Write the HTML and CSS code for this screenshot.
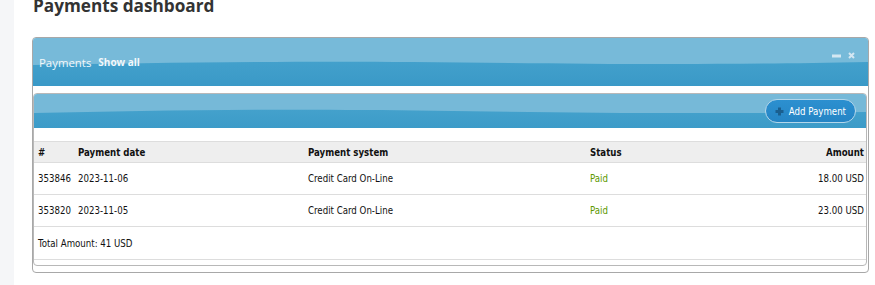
FILE: index.html
```html
<!DOCTYPE html>
<html lang="en">
<head>
  <meta charset="UTF-8">
  <meta name="viewport" content="width=device-width, initial-scale=1.0">
  <title>Payments dashboard</title>
  <link rel="stylesheet" href="styles.css">
</head>
<body>

<div class="sidebar"></div>

<div class="content">
  <h1 class="page-title">Payments dashboard</h1>

  <div class="panel">
    <div class="panel-head">
      <span class="panel-title">Payments</span>
      <a class="show-all" href="#">Show all</a>
      <span class="panel-tools">
        <svg width="9" height="4" viewBox="0 0 9 4"><rect x="0" y="0.5" width="9" height="3" fill="#d4e7f2"/></svg>
        <svg width="7" height="7" viewBox="0 0 7 7"><path d="M1 1L6 6M6 1L1 6" stroke="#d4e7f2" stroke-width="2"/></svg>
      </span>
    </div>

    <div class="panel-body">
      <div class="toolbar">
        <button class="add-btn">
          <svg width="9" height="9" viewBox="0 0 9 9"><path d="M4.5 0.5V8.5M0.5 4.5H8.5" stroke="#1a5f8f" stroke-width="3"/></svg>
          Add Payment
        </button>
      </div>

      <table class="payments">
        <colgroup>
          <col class="c-id">
          <col class="c-date">
          <col class="c-system">
          <col class="c-status">
          <col>
        </colgroup>
        <thead>
          <tr>
            <th>#</th>
            <th>Payment date</th>
            <th>Payment system</th>
            <th>Status</th>
            <th class="num">Amount</th>
          </tr>
        </thead>
        <tbody>
          <tr>
            <td>353846</td>
            <td>2023-11-06</td>
            <td>Credit Card On-Line</td>
            <td class="paid">Paid</td>
            <td class="num">18.00 USD</td>
          </tr>
          <tr>
            <td>353820</td>
            <td>2023-11-05</td>
            <td>Credit Card On-Line</td>
            <td class="paid">Paid</td>
            <td class="num">23.00 USD</td>
          </tr>
        </tbody>
        <tfoot>
          <tr>
            <td colspan="5">Total Amount: 41 USD</td>
          </tr>
        </tfoot>
      </table>
    </div>
  </div>
</div>

</body>
</html>
```

FILE: styles.css
```css
body {
  margin: 0;
  display: flex;
  min-height: 100vh;
  background-color: #fff;
  font-family: "DejaVu Sans Condensed", "DejaVu Sans", sans-serif;
  font-stretch: condensed;
  font-size: 9.6px;
  color: #111;
  overflow: hidden;
}

.sidebar {
  width: 14px;
  background-color: #f5f6f8;
}

.content {
  flex: 1;
  padding: 0 6px 0 18px;
}

.page-title {
  margin: -4px 0 21px 1px;
  font-family: "Open Sans", sans-serif;
  font-stretch: normal;
  font-size: 17.2px;
  line-height: 20px;
  font-weight: 700;
  color: #333;
}

.panel {
  border: 1px solid #a8a8a8;
  border-radius: 4px;
  padding-bottom: 6px;
}

.panel-head,
.toolbar {
  display: flex;
  align-items: center;
  border-radius: 3px 3px 0 0;
}

.panel-head {
  height: 48px;
  padding: 0 13px 0 6px;
  background:
    url("data:image/svg+xml,%3Csvg xmlns='http://www.w3.org/2000/svg' viewBox='0 0 835 48' preserveAspectRatio='none'%3E%3Cpath d='M0 27C120 25 240 23 380 24S640 28 835 24V0H0Z' fill='%2377bad9'/%3E%3C/svg%3E") no-repeat 0 0 / 100% 100%,
    linear-gradient(#4ba7d0, #3a99c7);
}

.panel-title {
  font-family: "Open Sans", sans-serif;
  font-stretch: normal;
  font-size: 11.4px;
  color: #f2f8fb;
}

.show-all {
  margin-left: 7px;
  font-family: "Open Sans", sans-serif;
  font-stretch: normal;
  font-size: 10px;
  font-weight: 700;
  color: #f2f8fb;
  text-decoration: none;
}

.panel-tools {
  display: flex;
  align-items: center;
  gap: 7px;
  margin-left: auto;
  margin-top: -13px;
}

.panel-tools svg {
  display: block;
}

.panel-body {
  margin: 7px 1px 0 0;
  border: 1px solid #b8b8b8;
  border-radius: 4px;
  padding-bottom: 5px;
}

.toolbar {
  height: 34px;
  justify-content: flex-end;
  padding-right: 10px;
  background:
    url("data:image/svg+xml,%3Csvg xmlns='http://www.w3.org/2000/svg' viewBox='0 0 832 34' preserveAspectRatio='none'%3E%3Cpath d='M0 19C100 17 200 15 330 16S600 21 832 18V0H0Z' fill='%2376b9d8'/%3E%3C/svg%3E") no-repeat 0 0 / 100% 100%,
    linear-gradient(#4aa6cf, #3c9bc8);
}

.add-btn {
  display: flex;
  align-items: center;
  gap: 5px;
  height: 24px;
  padding: 0 9px 0 9px;
  border: 1px solid #b3d6ea;
  border-radius: 12px;
  background: linear-gradient(#2c90d0, #2585c5);
  color: #fff;
  font-family: inherit;
  font-stretch: condensed;
  font-size: 9.6px;
  cursor: pointer;
}

.add-btn svg {
  display: block;
  margin-top: 1px;
}

.payments {
  width: 100%;
  margin-top: 13px;
  border-collapse: collapse;
  table-layout: fixed;
}

.c-id { width: 40px; }
.c-date { width: 230px; }
.c-system { width: 282px; }
.c-status { width: 150px; }

.payments th,
.payments td {
  padding: 0 4px;
  text-align: left;
  white-space: nowrap;
}

.payments th {
  height: 20px;
  background-color: #eee;
  border-top: 1px solid #ddd;
  border-bottom: 1px solid #ddd;
  font-weight: 700;
  color: #111;
}

.payments td {
  height: 31px;
  border-bottom: 1px solid #ddd;
}

.payments tfoot td {
  height: 32px;
}

.payments .num {
  text-align: right;
  padding-right: 2px;
}

.paid {
  color: #5e9800;
}
```
